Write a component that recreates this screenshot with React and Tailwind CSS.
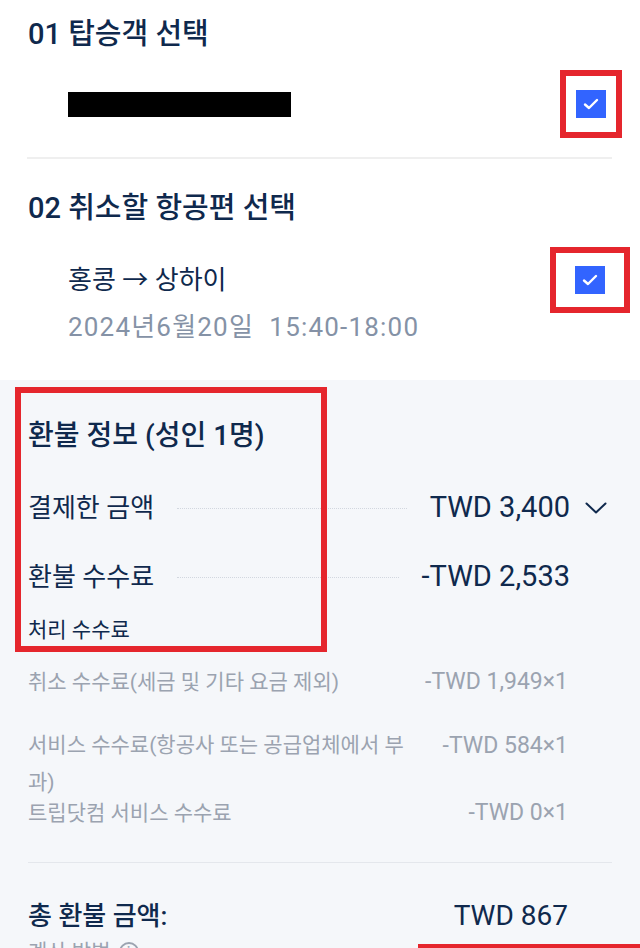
import React from 'react'

function Check() {
  return (
    <div className="w-[30px] h-[28px] bg-[#3264ff] flex items-center justify-center">
      <svg width="16" height="12" viewBox="0 0 16 12" fill="none">
        <path d="M2 6.5l4 3.5 8-8" stroke="white" strokeWidth="2.4" strokeLinecap="round" strokeLinejoin="round" />
      </svg>
    </div>
  )
}

function FeeRow({ label, value, className = '' }) {
  return (
    <div className={`flex justify-between items-start pr-[72px] text-[#9ba3b0] ${className}`}>
      <span className="w-[385px] text-[21px]">{label}</span>
      <span className="whitespace-nowrap text-[23px]">{value}</span>
    </div>
  )
}

export default function App() {
  return (
    <div className="h-[948px] overflow-hidden bg-white text-[#0f294d] font-['Roboto','Noto_Sans_CJK_KR',sans-serif]">
      {/* 01 passenger */}
      <div className="bg-white">
        <h2 className="pt-4 px-7 text-[29px] leading-9 font-medium">01 탑승객 선택</h2>
        <div className="mt-[18px] h-[68px] flex items-center justify-between pl-[68px] pr-[18px]">
          <div className="w-[223px] h-[25px] bg-black" />
          <div className="w-[62px] h-[68px] border-[6px] border-[#e5262d] flex items-center justify-center">
            <Check />
          </div>
        </div>
        <div className="mt-[19px] ml-[27px] mr-[28px] h-[2px] bg-[#efefef]" />

        {/* 02 flight */}
        <h2 className="mt-[31px] px-7 text-[29px] leading-9 font-medium">02 취소할 항공편 선택</h2>
        <div className="mt-[21px] h-[66px] flex items-center justify-between pl-[68px] pr-[10px]">
          <span className="text-[26px]">홍콩 → 상하이</span>
          <div className="w-[80px] h-[66px] border-[6px] border-[#e5262d] flex items-center justify-center">
            <Check />
          </div>
        </div>
        <p className="pl-[68px] pb-[39px] text-[26px] leading-[28px] tracking-[1.2px] text-[#8592a6] whitespace-pre">2024년6월20일  15:40-18:00</p>
      </div>

      {/* refund info */}
      <div className="relative bg-[#f5f7fa] pl-7 pt-10 h-[568px]">
        <div className="absolute left-[15px] top-[7px] w-[312px] h-[265px] border-[6px] border-[#e5262d]" />
        <h3 className="text-[28px] leading-8 font-medium">환불 정보 (성인 1명)</h3>

        <div className="mt-9 h-10 flex items-center pr-[33px]">
          <span className="text-[26px]">결제한 금액</span>
          <div className="flex-1 mx-[23px] border-b border-dotted border-[#d2d7df]" />
          <span className="text-[29px]">TWD 3,400</span>
          <svg className="ml-[15px]" width="22" height="12" viewBox="0 0 22 12" fill="none">
            <path d="M1.5 1.5L11 10.5L20.5 1.5" stroke="#0f294d" strokeWidth="2" strokeLinecap="round" strokeLinejoin="round" />
          </svg>
        </div>

        <div className="mt-[29px] h-10 flex items-center pr-[70px]">
          <span className="text-[26px]">환불 수수료</span>
          <div className="flex-1 mx-[23px] border-b border-dotted border-[#d2d7df]" />
          <span className="text-[29px]">-TWD 2,533</span>
        </div>

        <p className="mt-[18px] text-[21px] leading-[30px]">처리 수수료</p>

        <FeeRow className="mt-[22px] leading-[30px]" label="취소 수수료(세금 및 기타 요금 제외)" value="-TWD 1,949×1" />
        <FeeRow className="mt-[30px] leading-[37px]" label="서비스 수수료(항공사 또는 공급업체에서 부과)" value="-TWD 584×1" />
        <FeeRow className="leading-6" label="트립닷컴 서비스 수수료" value="-TWD 0×1" />

        <div className="mt-[37px] mr-7 h-px bg-[#e4e7ec]" />

        <div className="mt-[35px] h-9 flex items-center justify-between pr-[72px]">
          <span className="text-[26px] font-medium">총 환불 금액:</span>
          <span className="text-[28px]">TWD 867</span>
        </div>
        <div className="mt-[6px] flex items-center gap-2 text-[21px] leading-6 text-[#9ba3b0]">
          <span>계산 방법</span>
          <span className="w-[20px] h-[20px] rounded-full border-2 border-[#9ba3b0] flex items-center justify-center text-[12px] font-bold">i</span>
        </div>
        <div className="absolute left-[418px] top-[564px] w-[240px] h-[40px] border-[6px] border-[#e5262d]" />
      </div>
    </div>
  )
}
